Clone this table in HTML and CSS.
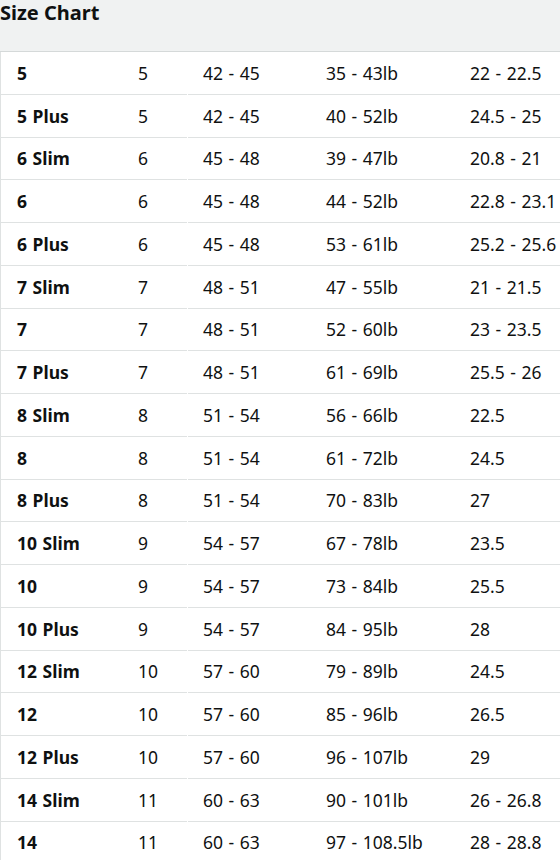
FILE: index.html
```html
<!DOCTYPE html>
<html lang="en">
<head>
<meta charset="utf-8">
<title>Size Chart</title>
<link rel="stylesheet" href="styles.css">
</head>
<body>
<div class="chart">
  <div class="chart-head"><h2 class="chart-title">Size Chart</h2></div>
  <div class="chart-body">
    <table class="sizes">
      <colgroup>
        <col class="c-size"><col class="c-num"><col class="c-gap"><col class="c-height"><col class="c-weight"><col class="c-waist">
      </colgroup>
      <tbody>
        <tr><td class="size">5</td><td>5</td><td class="gap"></td><td class="h">42 - 45</td><td>35 - 43lb</td><td>22 - 22.5</td></tr>
        <tr><td class="size">5 Plus</td><td>5</td><td class="gap"></td><td class="h">42 - 45</td><td>40 - 52lb</td><td>24.5 - 25</td></tr>
        <tr><td class="size">6 Slim</td><td>6</td><td class="gap"></td><td class="h">45 - 48</td><td>39 - 47lb</td><td>20.8 - 21</td></tr>
        <tr><td class="size">6</td><td>6</td><td class="gap"></td><td class="h">45 - 48</td><td>44 - 52lb</td><td>22.8 - 23.1</td></tr>
        <tr><td class="size">6 Plus</td><td>6</td><td class="gap"></td><td class="h">45 - 48</td><td>53 - 61lb</td><td>25.2 - 25.6</td></tr>
        <tr><td class="size">7 Slim</td><td>7</td><td class="gap"></td><td class="h">48 - 51</td><td>47 - 55lb</td><td>21 - 21.5</td></tr>
        <tr><td class="size">7</td><td>7</td><td class="gap"></td><td class="h">48 - 51</td><td>52 - 60lb</td><td>23 - 23.5</td></tr>
        <tr><td class="size">7 Plus</td><td>7</td><td class="gap"></td><td class="h">48 - 51</td><td>61 - 69lb</td><td>25.5 - 26</td></tr>
        <tr><td class="size">8 Slim</td><td>8</td><td class="gap"></td><td class="h">51 - 54</td><td>56 - 66lb</td><td>22.5</td></tr>
        <tr><td class="size">8</td><td>8</td><td class="gap"></td><td class="h">51 - 54</td><td>61 - 72lb</td><td>24.5</td></tr>
        <tr><td class="size">8 Plus</td><td>8</td><td class="gap"></td><td class="h">51 - 54</td><td>70 - 83lb</td><td>27</td></tr>
        <tr><td class="size">10 Slim</td><td>9</td><td class="gap"></td><td class="h">54 - 57</td><td>67 - 78lb</td><td>23.5</td></tr>
        <tr><td class="size">10</td><td>9</td><td class="gap"></td><td class="h">54 - 57</td><td>73 - 84lb</td><td>25.5</td></tr>
        <tr><td class="size">10 Plus</td><td>9</td><td class="gap"></td><td class="h">54 - 57</td><td>84 - 95lb</td><td>28</td></tr>
        <tr><td class="size">12 Slim</td><td>10</td><td class="gap"></td><td class="h">57 - 60</td><td>79 - 89lb</td><td>24.5</td></tr>
        <tr><td class="size">12</td><td>10</td><td class="gap"></td><td class="h">57 - 60</td><td>85 - 96lb</td><td>26.5</td></tr>
        <tr><td class="size">12 Plus</td><td>10</td><td class="gap"></td><td class="h">57 - 60</td><td>96 - 107lb</td><td>29</td></tr>
        <tr><td class="size">14 Slim</td><td>11</td><td class="gap"></td><td class="h">60 - 63</td><td>90 - 101lb</td><td>26 - 26.8</td></tr>
        <tr><td class="size">14</td><td>11</td><td class="gap"></td><td class="h">60 - 63</td><td>97 - 108.5lb</td><td>28 - 28.8</td></tr>
      </tbody>
    </table>
  </div>
</div>
</body>
</html>
```
FILE: styles.css
```css
html, body {
  margin: 0;
  padding: 0;
  background: #ffffff;
}
body {
  font-family: "Noto Sans", "Open Sans", sans-serif;
  color: #0f1111;
}
.chart {
  width: 560px;
  overflow: hidden;
}
.chart-head {
  height: 51px;
  background: #f0f2f2;
  border-bottom: 1px solid #d5d9d9;
}
.chart-title {
  margin: 0;
  font-size: 20px;
  line-height: 26px;
  font-weight: 700;
  padding-left: 0;
}
.chart-body {
  overflow: hidden;
}
.sizes {
  border-collapse: separate;
  border-spacing: 0;
  table-layout: fixed;
  width: 600px;
  font-size: 17.5px;
  word-spacing: 1px;
}
.c-size { width: 121px; }
.c-num { width: 66px; }
.c-gap { width: 1px; }
.c-height { width: 121px; }
.c-weight { width: 144px; }
.c-waist { width: 147px; }
.sizes td {
  height: 41.75px;
  padding: 0 0 0 17px;
  border-bottom: 1px solid #dfe2e2;
  vertical-align: middle;
  white-space: nowrap;
  line-height: 24px;
}
.sizes td.size {
  padding-left: 16px;
  border-left: 1px solid #dfe2e2;
  font-weight: 700;
}
.sizes td.gap {
  padding: 0;
  border-bottom-color: #ffffff;
}
.sizes td.h {
  padding-left: 15px;
}
```
